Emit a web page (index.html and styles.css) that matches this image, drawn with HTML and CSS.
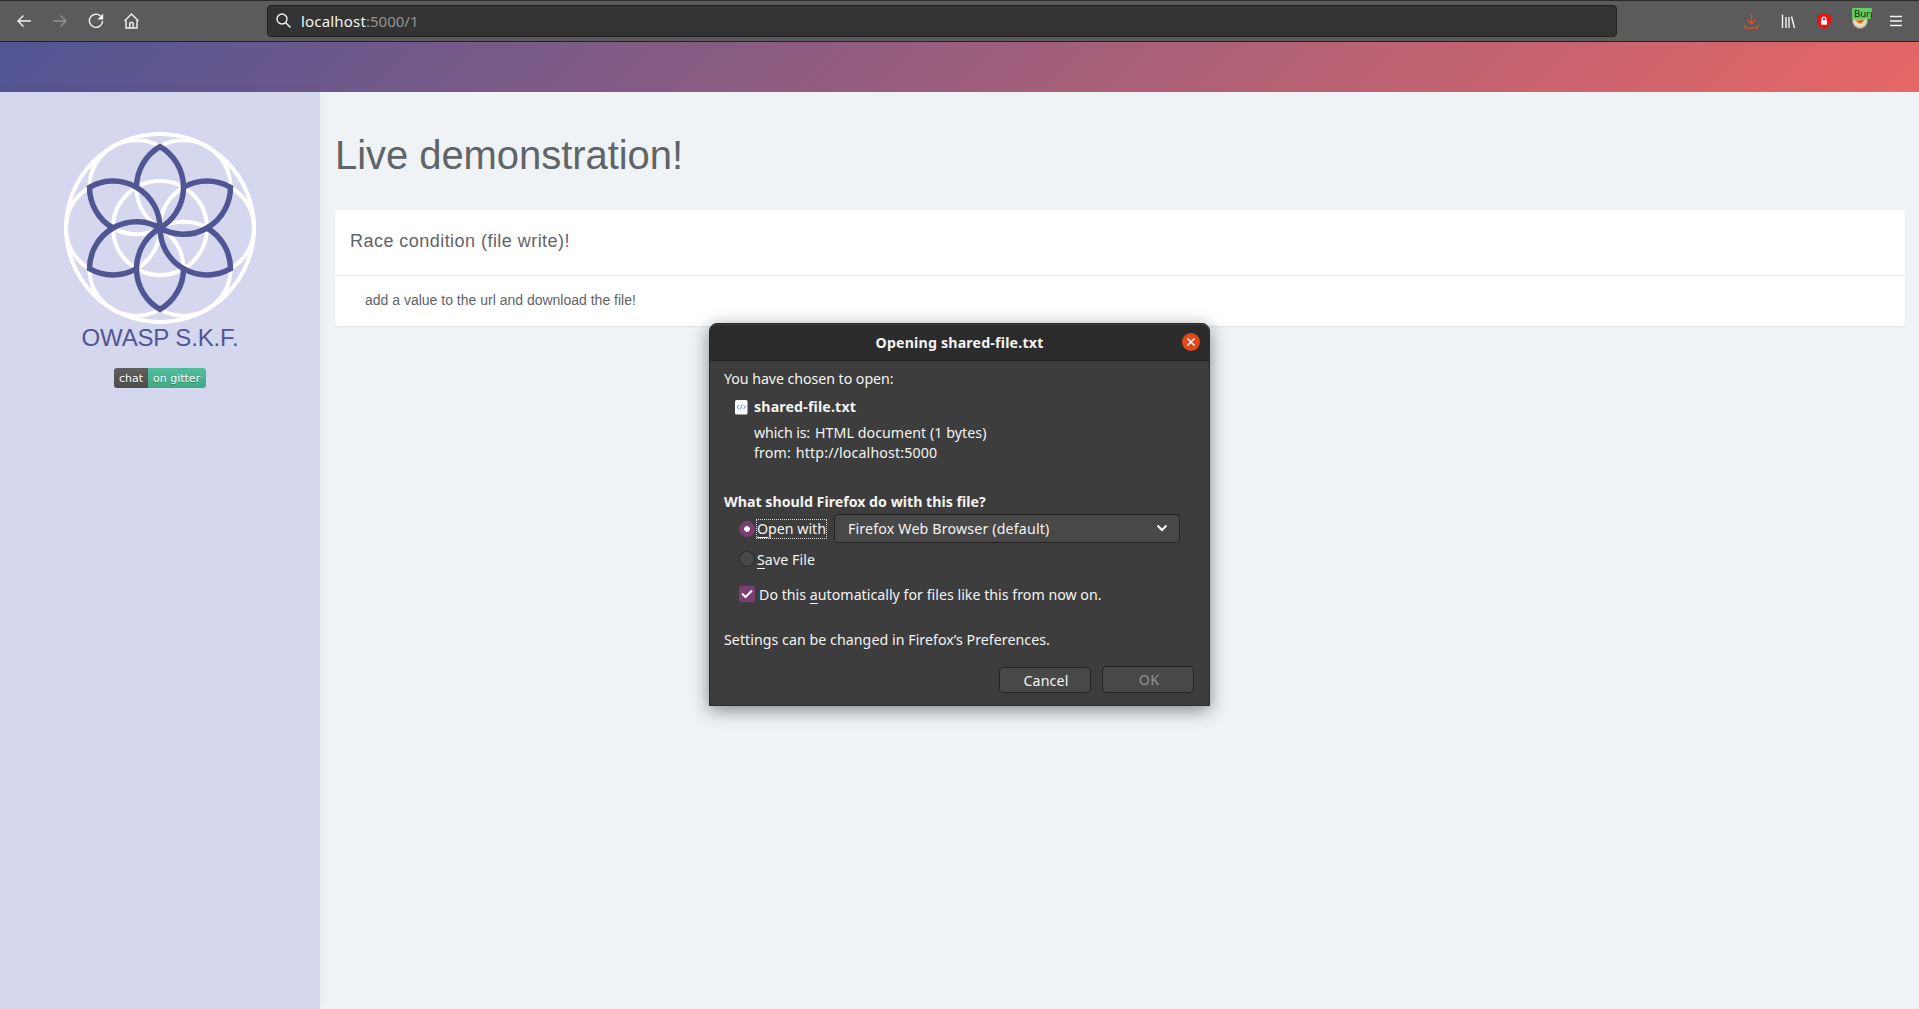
FILE: index.html
```html
<!DOCTYPE html>
<html lang="en">
<head>
<meta charset="utf-8">
<title>localhost:5000/1</title>
<link rel="stylesheet" href="styles.css">
</head>
<body>
<header class="toolbar">
  <nav class="nav">
    <svg width="16" height="16" viewBox="0 0 16 16"><path d="M15 8H2M7.500 2.500 2 8l5.500 5.500"/></svg>
    <svg class="dim" width="16" height="16" viewBox="0 0 16 16"><path d="M1 8h13M8.500 2.500 14 8l-5.500 5.500"/></svg>
    <svg width="16" height="16" viewBox="0 0 16 16"><path d="M12.600 3A6.600 6.600 0 1 0 14.600 8"/><path class="solid" d="M15.200.6v5.800H9.400z"/></svg>
    <svg width="16" height="16" viewBox="0 0 16 16"><path d="M.5 8 7.500 1l7 7M2 7.500v7.500h11V7.500M5.800 15v-4.500q0-1 1-1h1.400q1 0 1 1V15"/></svg>
  </nav>
  <div class="urlbar">
    <svg width="16" height="16" viewBox="0 0 16 16"><circle cx="6" cy="6" r="5"/><path d="m9.500 9.500 5 5"/></svg>
    <span class="url"><span class="host">localhost</span><span class="rest">:5000/1</span></span>
  </div>
  <div class="actions">
    <svg class="download" width="16" height="16" viewBox="0 0 16 16"><path d="M7.500 1v9.500M3 6.500 7.500 11 12 6.500M1 12v1.500Q1 15 2.500 15h10q1.500 0 1.500-1.500V12"/></svg>
    <svg width="16" height="16" viewBox="0 0 16 16"><path d="M2.500 1.500V15M6 4v11M9 4v11M11.500 3.500 14.500 15"/></svg>
    <svg class="shield" width="16" height="16" viewBox="0 0 16 16"><path class="plate" d="M8 0q3 2 7 2.300V8q0 5-7 8-7-3-7-8V2.300Q5 2 8 0z"/><rect x="5" y="7.200" width="6" height="4.500"/><path d="M6.200 7.500V6q0-1.700 1.800-1.700T9.800 6v1.500"/></svg>
    <span class="proxy">
      <svg width="16" height="16" viewBox="0 0 16 16"><circle class="fur" cx="8" cy="8" r="7.500"/><path class="face" d="M2.500 3h11l-.5 6-5 4.500L3 9z"/><path class="muzzle" d="m2 8 3 3 3 1.500L11 11l3-4"/><path class="line" d="M6 8.500h3L11 7"/></svg>
      <b>Burp</b>
    </span>
    <svg width="16" height="16" viewBox="0 0 16 16"><path d="M2 3.500h12M2 8h12M2 12.500h12"/></svg>
  </div>
</header>
<div class="banner"></div>
<div class="page">
  <aside class="sidebar">
    <svg class="logo" width="192" height="192" viewBox="-96 -96 192 192">
      <defs><path id="petal" d="M-23.500-40.700A47 47 0 0 1 0-81.400A47 47 0 0 1 0 0"/></defs>
      <g class="rings"><circle r="94"/><circle r="47"/><circle cx="47" r="47"/><circle cx="-47" r="47"/><circle cx="23.500" cy="40.700" r="47"/><circle cx="-23.500" cy="40.700" r="47"/><circle cx="23.500" cy="-40.700" r="47"/><circle cx="-23.500" cy="-40.700" r="47"/></g>
      <g class="petals"><use href="#petal"/><use href="#petal" transform="rotate(60)"/><use href="#petal" transform="rotate(120)"/><use href="#petal" transform="rotate(180)"/><use href="#petal" transform="rotate(240)"/><use href="#petal" transform="rotate(300)"/></g>
    </svg>
    <div class="brand">OWASP S.K.F.</div>
    <div class="gitter"><span class="chat">chat</span><span class="on">on gitter</span></div>
  </aside>
  <main class="content">
    <h1>Live demonstration!</h1>
    <section class="card">
      <h2>Race condition (file write)!</h2>
      <p>add a value to the url and download the file!</p>
    </section>
  </main>
</div>
<div class="dialog">
  <div class="title">Opening shared-file.txt
    <span class="close"><svg width="18" height="18" viewBox="0 0 18 18"><path d="m5.500 5.500 7 7m0-7-7 7"/></svg></span>
  </div>
  <div class="body">
    <div class="row chosen">You have chosen to open:</div>
    <div class="row file"><svg width="13" height="15" viewBox="0 0 13 15"><rect width="12.500" height="14.500" rx="1.500"/><path d="M4 5 2 7l2 2M8.500 5l2 2-2 2M7 4.500l-1.500 5"/></svg><b>shared-file.txt</b></div>
    <div class="row info"><span class="key">which is:</span><span class="type">HTML document (1 bytes)</span></div>
    <div class="row info from"><span>from:</span><span>http://localhost:5000</span></div>
    <div class="row ask"><b>What should Firefox do with this file?</b></div>
    <div class="choice open"><span class="radio on"></span><span class="focus"><u>O</u>pen with</span><span class="select"><span>Firefox Web Browser (default)</span><svg width="12" height="8" viewBox="0 0 12 8"><path d="m1.500 1.500 4.500 4.500 4.500-4.500"/></svg></span></div>
    <div class="choice save"><span class="radio"></span><span class="label"><u>S</u>ave File</span></div>
    <div class="choice auto"><span class="check"><svg width="16" height="16" viewBox="0 0 16 16"><path d="m3 7.500 3.500 3.500L13 4.500"/></svg></span><span class="label">Do this <u>a</u>utomatically for files like this from now on.</span></div>
    <div class="row settings">Settings can be changed in Firefox’s Preferences.</div>
    <div class="buttons"><span class="btn">Cancel</span><span class="btn ok">OK</span></div>
  </div>
</div>
</body>
</html>
```
FILE: styles.css
```css
* { box-sizing: border-box; }
body { margin: 0; height: 1009px; overflow: hidden; display: flex; flex-direction: column; background: #eff3f6; font-family: "Liberation Sans", Arial, sans-serif; color: #5f6468; }
svg { display: block; flex: none; fill: none; }
u { text-decoration: underline; text-decoration-thickness: 1px; text-underline-offset: 3px; text-decoration-skip-ink: none; }

/* Browser toolbar */
.toolbar { flex: none; height: 42px; border-top: 1px solid #2b2b2b; border-bottom: 1px solid #222; background: #5b5b5b; display: flex; align-items: center; font-family: "Noto Sans", sans-serif; }
.toolbar svg { stroke: #f4f4f4; stroke-width: 1.4; }
.toolbar .solid { fill: #f4f4f4; stroke: none; }
.nav { width: 267px; padding-left: 16px; display: flex; gap: 20px; }
.toolbar .dim { stroke: #929292; }
.urlbar { width: 1350px; height: 32px; background: #333; border: 1px solid #202020; border-radius: 4px; display: flex; align-items: center; padding-left: 8px; gap: 9px; }
.url { font-size: 15px; line-height: 20px; color: #f6f6f6; }
.host { letter-spacing: .18px; }
.url .rest { color: #959595; }
.actions { margin-left: 127px; display: flex; gap: 20px; }
.toolbar .download { stroke: #de4f20; }
.shield .plate { fill: #ee1111; stroke: none; }
.shield rect { fill: #fff; stroke: none; }
.proxy { position: relative; width: 16px; height: 16px; }
.proxy .fur { fill: #d5d0c8; stroke: #8d8880; stroke-width: 1; }
.proxy .face { fill: #f39a35; stroke: none; }
.proxy .muzzle { stroke: #f3eee6; stroke-width: 1.5; }
.proxy .line { stroke: #7a4a1c; stroke-width: 1; }
.proxy b { position: absolute; left: 0; top: -5px; width: 20px; height: 11px; padding-left: 2px; overflow: hidden; border-radius: 1px; background: #62cb64; color: #10240f; font: 9.5px/11px "Noto Sans", sans-serif; }

/* Page */
.banner { flex: none; height: 50px; background: linear-gradient(135deg, #505594, #e76765); }
.page { flex: 1; display: flex; }
.sidebar { width: 320px; background: #d5d7ee; display: flex; flex-direction: column; align-items: center; padding-top: 40px; box-shadow: 0 0 12px rgba(0,0,0,.05); }
.rings { stroke: #fff; stroke-width: 4; }
.petals { stroke: #505594; stroke-width: 5.500; }
.brand { font-size: 24px; line-height: 28px; letter-spacing: -.14px; color: #505594; }
.gitter { margin-top: 16px; height: 20px; display: flex; border-radius: 3px; overflow: hidden; font: 11px/21px "DejaVu Sans", sans-serif; color: #fff; text-shadow: 0 1px 0 rgba(1,1,1,.3); }
.gitter .chat { width: 34px; padding-left: 5px; background: linear-gradient(#5f5f5f, #4d4d4d); }
.gitter .on { width: 58px; padding-left: 5px; background: linear-gradient(#52be9b, #41a886); }

.content { flex: 1; padding: 35px 14px 0 15px; }
h1 { margin: 0; font-size: 40px; line-height: 56px; font-weight: 400; letter-spacing: -.06px; }
.card { margin-top: 27px; background: #fff; border-radius: 3px; box-shadow: 0 1px 2px rgba(0,0,0,.07); height: 116px; }
h2 { margin: 0; height: 66px; border-bottom: 1px solid #ebedef; padding: 20px 15px; font-size: 18px; line-height: 22px; font-weight: 400; letter-spacing: .46px; }
.card p { margin: 0; padding: 14px 30px; font-size: 14px; line-height: 20px; }

/* Download dialog */
.dialog { position: absolute; left: 709px; top: 323px; width: 501px; height: 383px; border: 1px solid #292929; border-radius: 8px 8px 0 0; background: #3d3d3d; box-shadow: 0 4px 18px rgba(0,0,0,.45); font: 14.200px/20px "Noto Sans", sans-serif; color: #f4f4f2; }
.title { height: 37px; border-radius: 7px 7px 0 0; background: #2b2b2b; border-top: 1px solid #3c3c3c; border-bottom: 1px solid #222; font-weight: 700; letter-spacing: .18px; display: flex; align-items: center; justify-content: center; position: relative; }
.close { position: absolute; right: 9px; top: 8px; width: 18px; height: 18px; border-radius: 50%; background: #e04a1a; }
.close svg { stroke: #fff; stroke-width: 1.500; }
.body { padding: 8px 15px 0 14px; display: flex; flex-direction: column; }
.row { height: 20px; white-space: nowrap; display: flex; }
.chosen { letter-spacing: -.05px; }
.file { margin-top: 8px; padding-left: 11px; gap: 6px; align-items: center; letter-spacing: .15px; }
.file rect { fill: #fafafa; }
.file path { stroke: #6f8df0; stroke-width: 1; }
.info { margin-top: 6px; padding-left: 30px; gap: 5px; }
.key { letter-spacing: -.12px; }
.type { letter-spacing: .06px; }
.info.from { margin-top: 0; letter-spacing: .15px; }
.ask { margin-top: 29px; }
.choice { padding-left: 15px; display: flex; align-items: center; height: 20px; white-space: nowrap; }
.radio { width: 16px; height: 16px; border-radius: 50%; border: 1px solid #282828; background: #484848; margin-right: 2px; }
.radio.on { border-color: #7a3f72; background: #7a3f72 radial-gradient(circle, #fff 2.500px, #7a3f72 3.200px); margin-right: 1px; }
.focus { border: 1px dotted #ddd; height: 20px; line-height: 18px; width: 71px; }
.label { padding-top: 2px; }
.open { height: 30px; margin-top: 2px; }
.select { align-self: flex-start; margin-left: 7px; width: 346px; height: 29px; border: 1px solid #222; border-radius: 4px; background: #484848; display: flex; align-items: center; justify-content: space-between; padding: 1px 11px 0 13px; letter-spacing: .17px; }
.select svg { margin-top: -2px; }
.select svg, .check svg { stroke: #fff; stroke-width: 2; }
.save { margin-top: 5px; letter-spacing: .07px; }
.auto { margin-top: 15px; letter-spacing: .02px; }
.check { width: 16px; height: 16px; border-radius: 2px; background: #7a3f72; margin-right: 4px; }
.settings { margin-top: 26px; letter-spacing: .05px; }
.buttons { margin-top: 16px; display: flex; justify-content: flex-end; align-items: flex-end; gap: 11px; }
.btn { width: 92px; height: 26px; padding: 1px 0 0 2px; border: 1px solid #222; border-radius: 4px; background: #484848; display: flex; align-items: center; justify-content: center; letter-spacing: .14px; }
.btn.ok { height: 27px; color: #929292; letter-spacing: .4px; }
```
